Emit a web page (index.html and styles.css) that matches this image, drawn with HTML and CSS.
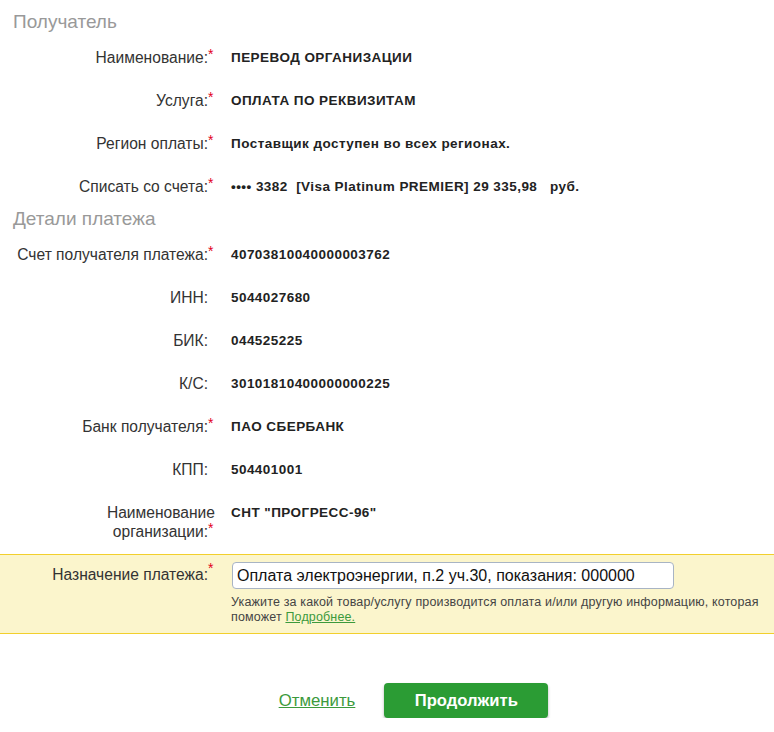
FILE: index.html
```html
<!DOCTYPE html>
<html lang="ru">
<head>
    <meta charset="UTF-8">
    <meta name="viewport" content="width=device-width, initial-scale=1.0">
    <title>Оплата по реквизитам</title>
    <link rel="stylesheet" href="styles.css">
</head>
<body>
    <div class="payment-form">
        <h2 class="section-title first">Получатель</h2>

        <div class="row">
            <div class="label">Наименование:<span class="req">*</span></div>
            <div class="value">ПЕРЕВОД ОРГАНИЗАЦИИ</div>
        </div>
        <div class="row">
            <div class="label">Услуга:<span class="req">*</span></div>
            <div class="value">ОПЛАТА ПО РЕКВИЗИТАМ</div>
        </div>
        <div class="row">
            <div class="label">Регион оплаты:<span class="req">*</span></div>
            <div class="value">Поставщик доступен во всех регионах.</div>
        </div>
        <div class="row">
            <div class="label">Списать со счета:<span class="req">*</span></div>
            <div class="value">•••• 3382&nbsp; [Visa Platinum PREMIER] 29 335,98 &nbsp; руб.</div>
        </div>

        <h2 class="section-title">Детали платежа</h2>

        <div class="row">
            <div class="label">Счет получателя платежа:<span class="req">*</span></div>
            <div class="value">40703810040000003762</div>
        </div>
        <div class="row">
            <div class="label">ИНН:<span class="no-req"></span></div>
            <div class="value">5044027680</div>
        </div>
        <div class="row">
            <div class="label">БИК:<span class="no-req"></span></div>
            <div class="value">044525225</div>
        </div>
        <div class="row">
            <div class="label">К/С:<span class="no-req"></span></div>
            <div class="value">30101810400000000225</div>
        </div>
        <div class="row">
            <div class="label">Банк получателя:<span class="req">*</span></div>
            <div class="value">ПАО СБЕРБАНК</div>
        </div>
        <div class="row">
            <div class="label">КПП:<span class="no-req"></span></div>
            <div class="value">504401001</div>
        </div>
        <div class="row last">
            <div class="label">Наименование<br>организации:<span class="req">*</span></div>
            <div class="value">СНТ "ПРОГРЕСС-96"</div>
        </div>

        <div class="purpose">
            <div class="label">Назначение платежа:<span class="req">*</span></div>
            <div class="purpose-field">
                <input class="purpose-input" type="text" value="Оплата электроэнергии, п.2 уч.30, показания: 000000">
                <p class="hint">Укажите за какой товар/услугу производится оплата и/или другую информацию, которая поможет <a href="#">Подробнее.</a></p>
            </div>
        </div>

        <div class="actions">
            <a href="#" class="cancel-link">Отменить</a>
            <button class="continue-btn">Продолжить</button>
        </div>
    </div>
</body>
</html>
```

FILE: styles.css
```css
body {
    margin: 0;
    font-family: 'Liberation Sans', Arial, sans-serif;
    background: white;
    color: #333;
}

.payment-form {
    width: 774px;
}

.section-title {
    margin: 0;
    padding: 0 0 3px 13px;
    font-size: 19px;
    font-weight: normal;
    line-height: 22px;
    color: #999;
}

.section-title.first {
    padding-top: 11px;
}

.row {
    display: flex;
    padding-top: 12px;
    min-height: 31px;
}

.row.last {
    padding-bottom: 13px;
    min-height: 0;
}

.label {
    width: 215px;
    flex-shrink: 0;
    padding-right: 16px;
    text-align: right;
    font-size: 15.6px;
    line-height: 19px;
    color: #333;
}

.req,
.no-req {
    display: inline-block;
    width: 7px;
    text-align: left;
    color: #e2001a;
    font-size: 14px;
    vertical-align: top;
    line-height: 12px;
}

.value {
    font-size: 13.5px;
    font-weight: bold;
    line-height: 19px;
    letter-spacing: 0.45px;
    color: #222;
}

.purpose {
    display: flex;
    background-color: #fbf5cc;
    border-top: 1px solid #f2cf2c;
    border-bottom: 1px solid #f2cf2c;
    padding: 7px 0 8px;
}

.purpose .label {
    line-height: 26px;
}

.purpose-field {
    width: 536px;
}

.purpose-input {
    box-sizing: border-box;
    width: 442px;
    height: 27px;
    margin: 0 0 0 1px;
    padding: 0 4px;
    border: 1px solid #a8b4c4;
    border-radius: 4px;
    font-family: 'Liberation Sans', Arial, sans-serif;
    font-size: 16px;
    color: #111;
    background: white;
}

.hint {
    margin: 6px 0 0;
    font-size: 12.5px;
    line-height: 15px;
    letter-spacing: 0.15px;
    color: #444;
}

.hint a {
    color: #3c9a3c;
}

.actions {
    display: flex;
    justify-content: center;
    align-items: center;
    gap: 29px;
    padding: 49px 0 0 53px;
}

.cancel-link {
    font-size: 16.8px;
    color: #3c9a3c;
}

.continue-btn {
    width: 164px;
    height: 35px;
    border: none;
    border-radius: 4px;
    background-color: #2b9c34;
    color: white;
    font-family: 'Liberation Sans', Arial, sans-serif;
    font-size: 16.6px;
    font-weight: bold;
    box-shadow: 0 2px 3px rgba(0, 0, 0, 0.3);
    cursor: pointer;
}

.continue-btn:hover {
    background-color: #238a2b;
}
```
